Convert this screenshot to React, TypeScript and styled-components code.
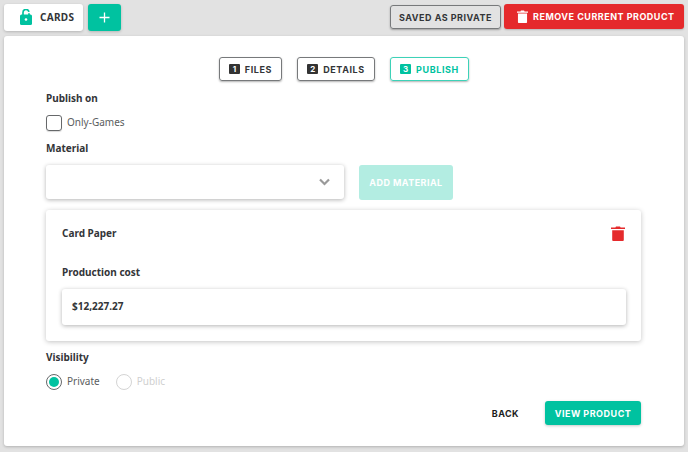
import styled, { createGlobalStyle } from "styled-components";

const teal = "#00c2a0";
const red = "#e52a2c";
const dark = "#333538";

const GlobalStyle = createGlobalStyle`
  html, body {
    margin: 0;
    padding: 0;
    background: #e2e2e2;
  }
  body {
    font-family: "Noto Sans", "Open Sans", sans-serif;
    color: ${dark};
  }
`;

const Page = styled.div`
  width: 688px;
  height: 452px;
  box-sizing: border-box;
  padding: 4px 4px 6px;
  display: flex;
  flex-direction: column;
  gap: 5px;
  overflow: hidden;
`;

const TopBar = styled.div`
  display: flex;
  align-items: flex-start;
  height: 27px;
`;

const TabGroup = styled.div`
  display: flex;
  gap: 5px;
`;

const Tab = styled.div`
  width: 79px;
  height: 27px;
  box-sizing: border-box;
  padding: 0 0 1px 16px;
  display: flex;
  align-items: center;
  gap: 8px;
  background: #fff;
  border-radius: 3px;
  box-shadow: 0 1px 3px rgba(0, 0, 0, 0.2);
  font-size: 10px;
  font-weight: 700;
  letter-spacing: 0.3px;
`;

const AddButton = styled.div`
  width: 33px;
  height: 27px;
  display: flex;
  align-items: center;
  justify-content: center;
  background: ${teal};
  border-radius: 3px;
  box-shadow: 0 1px 3px rgba(0, 0, 0, 0.2);
  color: #fff;
`;

const TopActions = styled.div`
  margin-left: auto;
  display: flex;
  align-items: flex-start;
  gap: 3px;
`;

const OutlineButton = styled.div`
  width: 111px;
  height: 24px;
  margin-top: 1px;
  box-sizing: border-box;
  display: flex;
  align-items: center;
  justify-content: center;
  border: 1px solid #77797b;
  border-radius: 3px;
  box-shadow: 0 1px 2px rgba(0, 0, 0, 0.3);
  font-family: "Inter", sans-serif;
  font-size: 9px;
  font-weight: 700;
  letter-spacing: 0.5px;
  white-space: nowrap;
`;

const DangerButton = styled.div`
  width: 180px;
  height: 25px;
  box-sizing: border-box;
  padding-left: 13px;
  display: flex;
  align-items: center;
  gap: 5px;
  background: ${red};
  border-radius: 3px;
  box-shadow: 0 1px 2px rgba(0, 0, 0, 0.2);
  color: #fff;
  font-family: "Inter", sans-serif;
  font-size: 9px;
  font-weight: 700;
  letter-spacing: 0.5px;
  white-space: nowrap;
`;

const Panel = styled.div`
  flex: 1;
  box-sizing: border-box;
  padding: 21px 42px 21px;
  background: #fff;
  border-radius: 3px;
  box-shadow: 0 1px 3px rgba(0, 0, 0, 0.22);
  display: flex;
  flex-direction: column;
`;

const Steps = styled.div`
  display: flex;
  justify-content: center;
  gap: 15px;
`;

const Step = styled.div<{ $active?: boolean; $width: number }>`
  width: ${(p) => p.$width}px;
  height: 24px;
  box-sizing: border-box;
  display: flex;
  align-items: center;
  justify-content: center;
  gap: 5px;
  border: 1px solid ${(p) => (p.$active ? "#3dd2b8" : "#77797b")};
  border-radius: 3px;
  box-shadow: 0 1px 2px rgba(0, 0, 0, 0.3);
  color: ${(p) => (p.$active ? teal : dark)};
  font-family: "Inter", sans-serif;
  font-size: 9px;
  font-weight: 700;
  letter-spacing: 0.6px;
`;

const StepNumber = styled.span<{ $active?: boolean }>`
  width: 11px;
  height: 10px;
  display: flex;
  align-items: center;
  justify-content: center;
  background: ${(p) => (p.$active ? teal : "#333")};
  color: #fff;
  border-radius: 1px;
  font-size: 8px;
  letter-spacing: 0;
`;

const Label = styled.div<{ $top: number }>`
  margin-top: ${(p) => p.$top}px;
  height: 16px;
  line-height: 16px;
  font-size: 10px;
  font-weight: 700;
`;

const OptionRow = styled.div`
  margin-top: 9px;
  display: flex;
  align-items: center;
  height: 16px;
`;

const Checkbox = styled.span`
  width: 16px;
  height: 16px;
  box-sizing: border-box;
  border: 1px solid #66686a;
  border-radius: 3px;
  box-shadow: 0 1px 1px rgba(0, 0, 0, 0.15);
`;

const OptionText = styled.span<{ $muted?: boolean }>`
  margin: -2px 0 0 5px;
  font-size: 10px;
  color: ${(p) => (p.$muted ? "#cfcfcf" : "#5a5d60")};
`;

const Radio = styled.span<{ $checked?: boolean }>`
  width: 16px;
  height: 16px;
  box-sizing: border-box;
  border: 1px solid ${(p) => (p.$checked ? "#66686a" : "#d4d4d4")};
  border-radius: 50%;
  display: flex;
  align-items: center;
  justify-content: center;
  &::after {
    content: "";
    width: 10px;
    height: 10px;
    border-radius: 50%;
    background: ${(p) => (p.$checked ? teal : "transparent")};
  }
`;

const RadioOption = styled.div`
  display: flex;
  align-items: center;
  margin-right: 16px;
`;

const MaterialRow = styled.div`
  margin-top: 9px;
  display: flex;
  gap: 15px;
  height: 35px;
`;

const Select = styled.div`
  width: 298px;
  height: 34px;
  box-sizing: border-box;
  padding-right: 14px;
  display: flex;
  align-items: center;
  justify-content: flex-end;
  background: #fff;
  border-radius: 3px;
  box-shadow: 0 1px 4px rgba(0, 0, 0, 0.3);
  color: #9a9a9a;
`;

const AddMaterial = styled.div`
  width: 94px;
  height: 35px;
  display: flex;
  align-items: center;
  justify-content: center;
  background: #b3ede2;
  border-radius: 3px;
  color: #fff;
  font-family: "Inter", sans-serif;
  font-size: 9px;
  font-weight: 700;
  letter-spacing: 0.45px;
  white-space: nowrap;
`;

const MaterialCard = styled.div`
  margin-top: 10px;
  width: 595px;
  height: 131px;
  box-sizing: border-box;
  padding: 15px 16px 0;
  background: #fff;
  border-radius: 3px;
  box-shadow: 0 1px 5px rgba(0, 0, 0, 0.24);
`;

const CardHeader = styled.div`
  display: flex;
  align-items: center;
  justify-content: space-between;
  height: 16px;
  font-size: 10px;
  font-weight: 700;
`;

const CardLabel = styled.div`
  margin-top: 23px;
  height: 16px;
  line-height: 16px;
  font-size: 10px;
  font-weight: 700;
`;

const CostInput = styled.div`
  margin-top: 9px;
  width: 564px;
  height: 36px;
  box-sizing: border-box;
  padding: 0 0 3px 10px;
  display: flex;
  align-items: center;
  background: #fff;
  border-radius: 3px;
  box-shadow: 0 1px 4px rgba(0, 0, 0, 0.3);
  font-size: 10px;
  font-weight: 700;
`;

const Footer = styled.div`
  margin-top: 11px;
  display: flex;
  align-items: center;
  justify-content: flex-end;
  width: 595px;
  height: 24px;
`;

const BackButton = styled.div`
  margin-right: 26px;
  font-family: "Inter", sans-serif;
  font-size: 9px;
  font-weight: 700;
  letter-spacing: 0.45px;
  color: #1d1d1d;
`;

const ViewButton = styled.div`
  width: 96px;
  height: 24px;
  display: flex;
  align-items: center;
  justify-content: center;
  background: ${teal};
  border-radius: 3px;
  box-shadow: 0 1px 3px rgba(0, 0, 0, 0.22);
  color: #fff;
  font-family: "Inter", sans-serif;
  font-size: 9px;
  font-weight: 700;
  letter-spacing: 0.5px;
  white-space: nowrap;
`;

const Trash = ({ width, height, color }: { width: number; height: number; color: string }) => (
  <svg width={width} height={height} viewBox="0 0 14 16" preserveAspectRatio="none" fill={color}>
    <path d="M5 0.5h4l.6 1.2H14v1.6H0V1.7h4.4z" />
    <path d="M1.2 4.4h11.6V15a1 1 0 0 1-1 1H2.2a1 1 0 0 1-1-1z" />
  </svg>
);

const Lock = () => (
  <svg width="12" height="16" viewBox="0 0 12 16">
    <path
      d="M3 6V3.6a3 3 0 0 1 6-.2V6"
      fill="none"
      stroke={teal}
      strokeWidth="1.7"
      strokeDasharray="11 1.4 6"
    />
    <rect x="0" y="5.5" width="12" height="10.5" rx="1.5" fill={teal} />
    <circle cx="6" cy="10.5" r="1.3" fill="#fff" />
  </svg>
);

const Plus = () => (
  <svg width="11" height="11" viewBox="0 0 11 11" stroke="currentColor" strokeWidth="1.3">
    <path d="M5.5 0.5v10M0.5 5.5h10" />
  </svg>
);

const Chevron = () => (
  <svg width="11" height="8" viewBox="0 0 11 8" fill="none" stroke="currentColor" strokeWidth="2.2">
    <path d="M1 1.5l4.5 4.5L10 1.5" />
  </svg>
);

export default function App() {
  return (
    <Page>
      <GlobalStyle />
      <TopBar>
        <TabGroup>
          <Tab>
            <Lock />
            CARDS
          </Tab>
          <AddButton>
            <Plus />
          </AddButton>
        </TabGroup>
        <TopActions>
          <OutlineButton>SAVED AS PRIVATE</OutlineButton>
          <DangerButton>
            <Trash width={11} height={13} color="#fff" />
            REMOVE CURRENT PRODUCT
          </DangerButton>
        </TopActions>
      </TopBar>
      <Panel>
        <Steps>
          <Step $width={63}>
            <StepNumber>1</StepNumber>
            FILES
          </Step>
          <Step $width={78}>
            <StepNumber>2</StepNumber>
            DETAILS
          </Step>
          <Step $width={79} $active>
            <StepNumber $active>3</StepNumber>
            PUBLISH
          </Step>
        </Steps>
        <Label $top={9}>Publish on</Label>
        <OptionRow>
          <Checkbox />
          <OptionText>Only-Games</OptionText>
        </OptionRow>
        <Label $top={9}>Material</Label>
        <MaterialRow>
          <Select>
            <Chevron />
          </Select>
          <AddMaterial>ADD MATERIAL</AddMaterial>
        </MaterialRow>
        <MaterialCard>
          <CardHeader>
            Card Paper
            <Trash width={14} height={15} color={red} />
          </CardHeader>
          <CardLabel>Production cost</CardLabel>
          <CostInput>$12,227.27</CostInput>
        </MaterialCard>
        <Label $top={8}>Visibility</Label>
        <OptionRow>
          <RadioOption>
            <Radio $checked />
            <OptionText>Private</OptionText>
          </RadioOption>
          <RadioOption>
            <Radio />
            <OptionText $muted>Public</OptionText>
          </RadioOption>
        </OptionRow>
        <Footer>
          <BackButton>BACK</BackButton>
          <ViewButton>VIEW PRODUCT</ViewButton>
        </Footer>
      </Panel>
    </Page>
  );
}
